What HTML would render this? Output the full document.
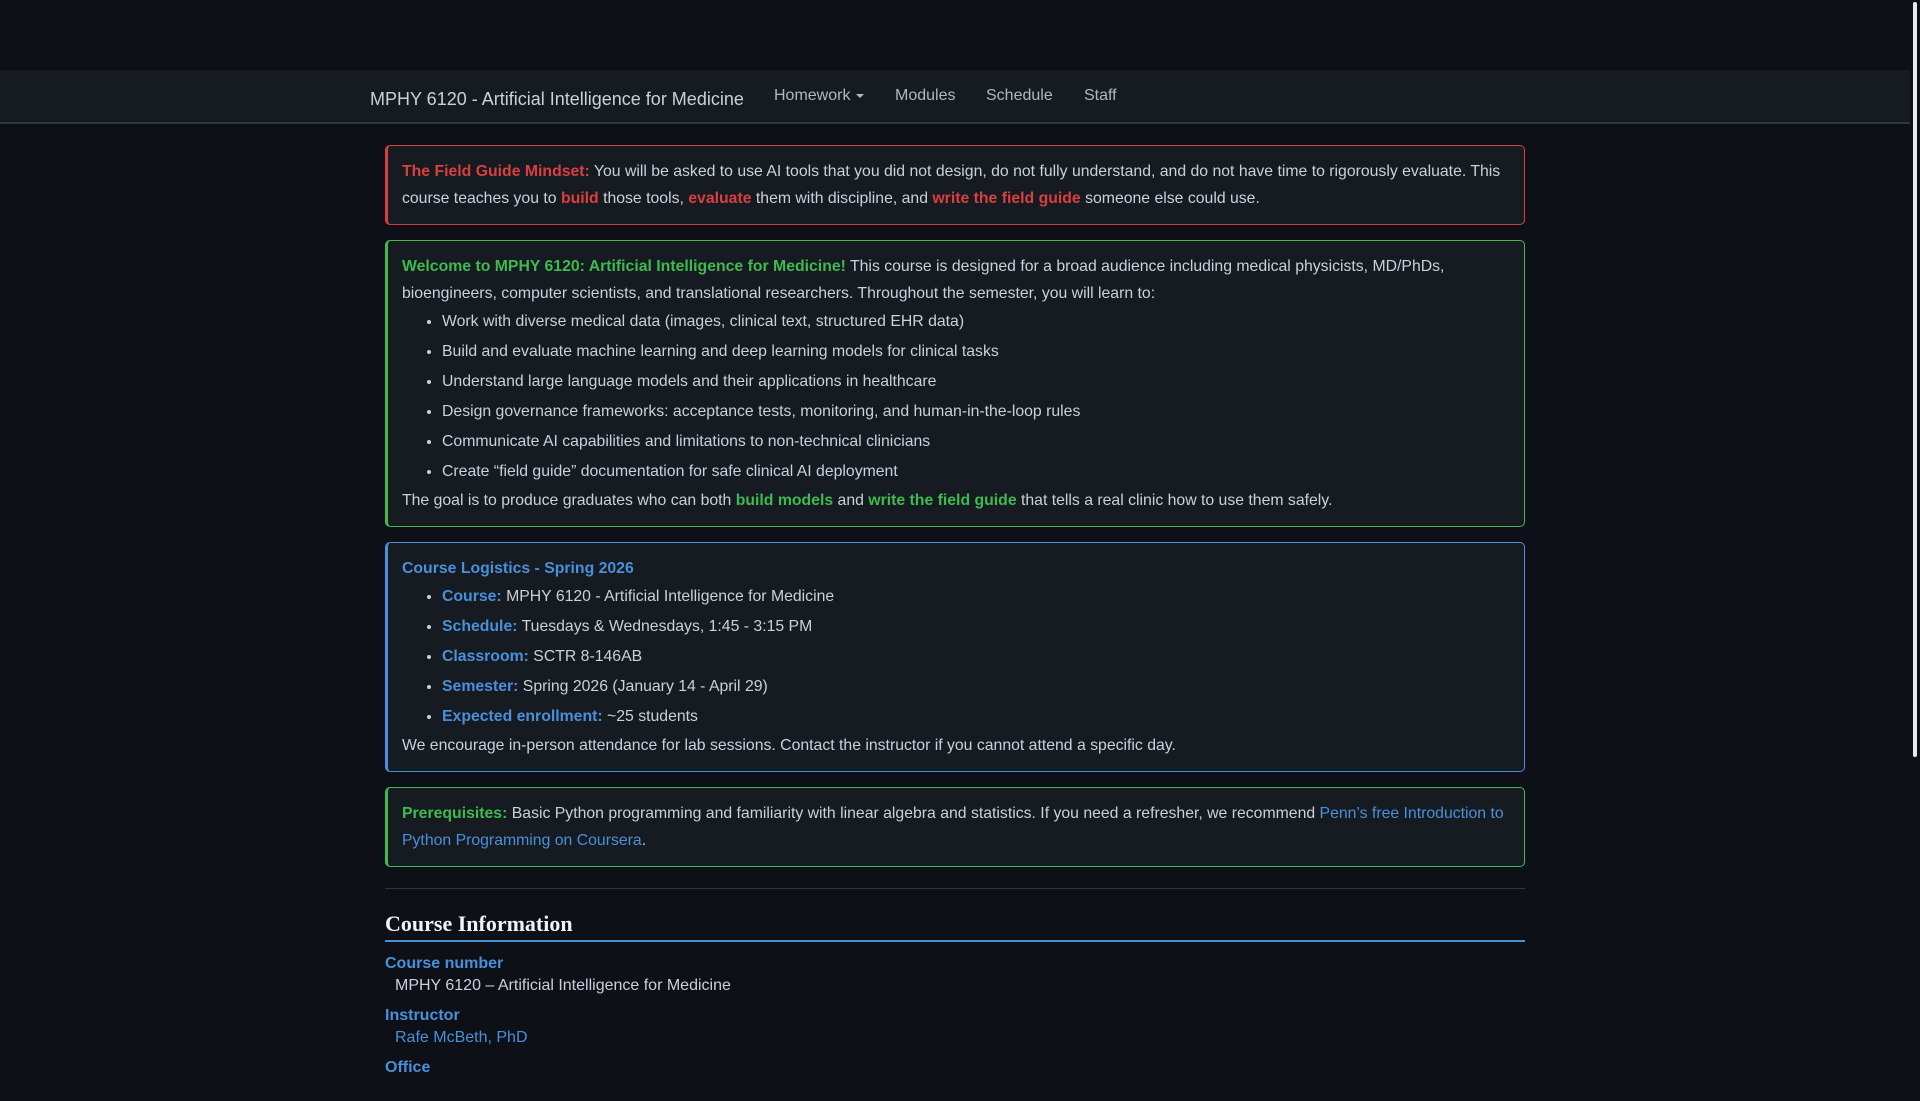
<!DOCTYPE html>
<html><head><meta charset="utf-8"><style>
html,body{margin:0;padding:0;background:#0d1117;width:1920px;height:1080px;overflow:hidden}
body{font-family:"Liberation Sans",sans-serif;color:#c9d1d9;font-size:15.8px}
.nav{position:absolute;top:70px;left:0;width:1910px;height:54px;background:#161b22;border-bottom:2px solid #30363d;box-sizing:border-box}
.brand{position:absolute;left:370px;top:19px;font-size:18px;color:#c9d1d9;white-space:nowrap}
.ni{position:absolute;top:17px;font-size:16px;color:#b0b8c0;white-space:nowrap}
.caret{display:inline-block;width:0;height:0;border-left:4px solid transparent;border-right:4px solid transparent;border-top:4px solid #b0b8c0;vertical-align:middle;margin-left:6px}
.sb{position:absolute;right:0;top:0;width:10px;height:1080px;background:#0d1117}
.sb div{position:absolute;left:3px;top:2px;width:4px;height:755px;background:#e8e8e8;border-radius:2px}
.main{position:absolute;left:385px;top:145px;width:1140px}
.box{background:#161b22;border:1px solid;border-left-width:3px;border-radius:5px;padding:12px 14px 12px 14px;line-height:27px;margin-bottom:15px}
.r{border-color:#da3f3f}.r b{color:#da3f3f}
.g{border-color:#3fb950}.g b{color:#3fb950}
.bl{border-color:#4a8fd9}.bl b{color:#4a8fd9}
.box p{margin:0}
ul{margin:0;padding-left:40px}
li{line-height:30px}
a{color:#4a8fd9;text-decoration:none}
hr{border:0;border-top:1px solid #30363d;margin:21px 0 0}
h2{font-family:"Liberation Serif",serif;color:#f0f3f6;font-size:22px;margin:0;padding-top:21px;padding-bottom:2px;border-bottom:2px solid #4a8fd9;line-height:28px}
dt{color:#4a8fd9;font-weight:bold;margin-top:8px;line-height:22px;font-size:16px}
dt:first-child{margin-top:11px}
dd{margin-left:10px;line-height:22px;font-size:16px}
</style></head><body>
<div class="nav">
<div class="brand">MPHY 6120 - Artificial Intelligence for Medicine</div>
<div class="ni" style="left:774px">Homework<span class="caret"></span></div>
<div class="ni" style="left:895px">Modules</div>
<div class="ni" style="left:986px">Schedule</div>
<div class="ni" style="left:1084px">Staff</div>
</div>
<div class="sb"><div></div></div>
<div class="main">
<div class="box r"><p><b>The Field Guide Mindset:</b> You will be asked to use AI tools that you did not design, do not fully understand, and do not have time to rigorously evaluate. This course teaches you to <b>build</b> those tools, <b>evaluate</b> them with discipline, and <b>write the field guide</b> someone else could use.</p></div>
<div class="box g"><p><b>Welcome to MPHY 6120: Artificial Intelligence for Medicine!</b> This course is designed for a broad audience including medical physicists, MD/PhDs, bioengineers, computer scientists, and translational researchers. Throughout the semester, you will learn to:</p>
<ul><li>Work with diverse medical data (images, clinical text, structured EHR data)</li>
<li>Build and evaluate machine learning and deep learning models for clinical tasks</li>
<li>Understand large language models and their applications in healthcare</li>
<li>Design governance frameworks: acceptance tests, monitoring, and human-in-the-loop rules</li>
<li>Communicate AI capabilities and limitations to non-technical clinicians</li>
<li>Create “field guide” documentation for safe clinical AI deployment</li></ul>
<p>The goal is to produce graduates who can both <b>build models</b> and <b>write the field guide</b> that tells a real clinic how to use them safely.</p></div>
<div class="box bl"><p><b>Course Logistics - Spring 2026</b></p>
<ul><li><b>Course:</b> MPHY 6120 - Artificial Intelligence for Medicine</li>
<li><b>Schedule:</b> Tuesdays &amp; Wednesdays, 1:45 - 3:15 PM</li>
<li><b>Classroom:</b> SCTR 8-146AB</li>
<li><b>Semester:</b> Spring 2026 (January 14 - April 29)</li>
<li><b>Expected enrollment:</b> ~25 students</li></ul>
<p>We encourage in-person attendance for lab sessions. Contact the instructor if you cannot attend a specific day.</p></div>
<div class="box g" style="margin-bottom:0"><p><b>Prerequisites:</b> Basic Python programming and familiarity with linear algebra and statistics. If you need a refresher, we recommend <a>Penn’s free Introduction to Python Programming on Coursera</a>.</p></div>
<hr>
<h2>Course Information</h2>
<dl style="margin:0">
<dt>Course number</dt><dd>MPHY 6120 – Artificial Intelligence for Medicine</dd>
<dt>Instructor</dt><dd><a>Rafe McBeth, PhD</a></dd>
<dt>Office</dt><dd>&nbsp;</dd>
</dl>
</div>
</body></html>
